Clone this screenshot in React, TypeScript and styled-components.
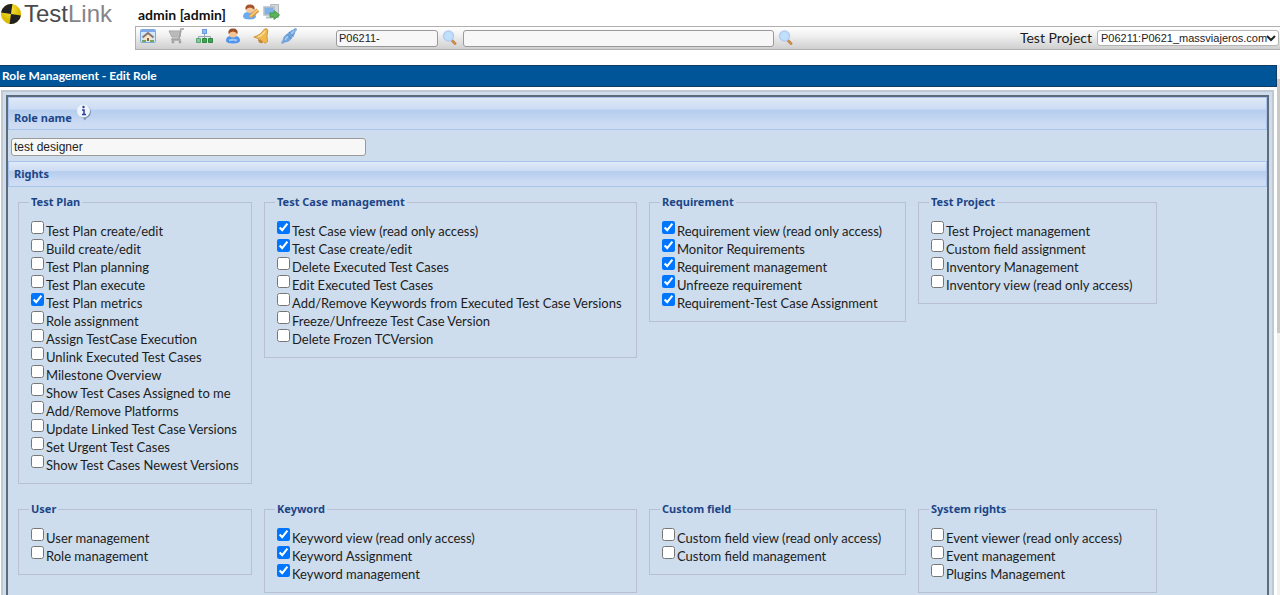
import React, { useState } from "react";
import styled, { createGlobalStyle } from "styled-components";

const humanist = `Lato, "Noto Sans", sans-serif`;
const heading = `"Noto Sans", "Open Sans", sans-serif`;
const arial = `"Liberation Sans", Arial, sans-serif`;

const GlobalStyle = createGlobalStyle`
  *, *::before, *::after { box-sizing: border-box; }
  html, body, #root { height: 100%; }
  body { margin: 0; background: #fff; color: #1c1c1c; font: 14px/18px ${humanist}; overflow: hidden; }
  button, input, select { font-family: ${arial}; }
`;

const Page = styled.div`
  display: flex;
  flex-direction: column;
  height: 100%;
`;
const Header = styled.header`
  display: flex;
  height: 50px;
  flex: none;
`;
const Logo = styled.a`
  display: flex;
  align-items: flex-start;
  gap: 3px;
  width: 135px;
  padding-left: 1px;
  flex: none;
  color: #4a4a4c;
  font: 24px/28px ${arial};
  text-decoration: none;
  svg { margin-top: 3px; }
`;
const LogoTail = styled.span`color: #858588;`;
const HeaderMain = styled.div`
  display: flex;
  flex: 1;
  flex-direction: column;
  min-width: 0;
`;
const UserLine = styled.div`
  display: flex;
  align-items: center;
  gap: 4px;
  height: 26px;
  padding: 0 0 2px 3px;
`;
const UserName = styled.span`
  margin-right: 13px;
  padding-top: 6px;
  color: #111;
  font-weight: 700;
`;
const IconButton = styled.button`
  display: flex;
  padding: 0;
  border: 0;
  background: none;
  cursor: pointer;
`;
const Toolbar = styled.nav`
  display: flex;
  align-items: center;
  height: 24px;
  padding: 0 1px 0 4px;
  border: 1px solid #b0b0b0;
  border-right: 0;
  background: linear-gradient(#fff, #f2f2f2 35%, #cfcfcf);
`;
const ToolIcons = styled.div`
  display: flex;
  gap: 12px;
  margin-right: 39px;
  padding-bottom: 4px;
`;
const Field = styled.input<{ $width: number; $small?: boolean }>`
  width: ${(p) => p.$width}px;
  height: ${(p) => (p.$small ? 17 : 18)}px;
  padding: 0 2px;
  border: 1px solid #9a9a9a;
  border-radius: 3px;
  background: #f7f7f7;
  color: #222;
  font-size: ${(p) => (p.$small ? 11 : 12)}px;
`;
const SearchForm = styled.form`
  display: flex;
  align-items: center;
  gap: 4px;
  margin-right: 5px;
`;
const ProjectPicker = styled.label`
  display: flex;
  align-items: center;
  gap: 5px;
  margin-left: auto;
`;
const ProjectSelect = styled.span`
  display: grid;
  align-items: center;
  > * { grid-area: 1 / 1; }
  svg { justify-self: end; margin-right: 3px; pointer-events: none; }
  select {
    appearance: none;
    width: 182px;
    height: 16px;
    padding: 0 10px 0 3px;
    border: 1px solid #b5b5b5;
    border-radius: 3px;
    background: #fff;
    color: #222;
    font-size: 11px;
  }
`;
const Body = styled.main`
  display: flex;
  flex: 1;
  min-height: 0;
  margin-top: 15px;
`;
const Content = styled.div`
  flex: 1;
  min-width: 0;
  overflow: hidden;
`;
const PageTitle = styled.h1`
  margin: 0;
  padding: 0 2px;
  border: 1px solid #123a5e;
  border-left: 0;
  background: #005498;
  color: #fff;
  font: 700 12px/20px ${humanist};
`;
const WorkArea = styled.div`
  margin: 3px 3px 0 1px;
  padding: 3px;
  border: 2px solid #c0c8d2;
  background: #cddded;
`;
const Frame = styled.form`
  min-height: 520px;
  border: 2px solid #5f6b78;
`;
const SectionBar = styled.div<{ $tall?: boolean }>`
  display: flex;
  align-items: ${(p) => (p.$tall ? "flex-start" : "center")};
  gap: 4px;
  height: ${(p) => (p.$tall ? 33 : 26)}px;
  padding: ${(p) => (p.$tall ? 6 : 0)}px 5px 0;
  border: 1px solid #a9c5ee;
  background: linear-gradient(#dfe9f8, #ccdcf3 36%, #b5cdee 40%, #cddcf3 85%);
  color: #1c4587;
  font: 700 11px/18px ${heading};
`;
const RoleLabel = styled.label`padding-top: 5px;`;
const NameRow = styled.div`
  display: flex;
  padding: 8px 3px 5px;
`;
const Groups = styled.div`
  display: grid;
  grid-template-columns: 234px 373px 257px 239px;
  column-gap: 12px;
  row-gap: 16px;
  align-items: start;
  padding: 6px 10px;
`;
const Group = styled.fieldset`
  min-width: 0;
  margin: 0;
  padding: 10px;
  border: 1px solid #b9bfd4;
`;
const Legend = styled.legend`
  padding: 0 2px;
  color: #1c4587;
  font: 700 11px/18px ${heading};
`;
const Right = styled.label`
  display: flex;
  gap: 2px;
  height: 18px;
  margin-left: 2px;
  white-space: nowrap;
  font-size: 13px;
  line-height: 20px;
  input { flex: none; width: 13px; height: 13px; margin: 0; accent-color: #0075ff; }
`;
const ScrollRail = styled.div`
  flex: none;
  width: 3px;
  padding-top: 14px;
  background: #f1f1f1;
`;
const ScrollThumb = styled.div`
  height: 254px;
  background: #c9c9c9;
`;

const LogoMark = () => (
  <svg width="20" height="22" viewBox="0 0 20 22">
    <defs>
      <radialGradient id="gold" cx="0.4" cy="0.3">
        <stop offset="0" stopColor="#fbe84a" /><stop offset="1" stopColor="#dcbc00" />
      </radialGradient>
    </defs>
    <g transform="rotate(8 10 11)">
      <circle cx="10" cy="11" r="10" fill="url(#gold)" />
      <path d="M10 11V1A10 10 0 0 0 0 11ZM10 11V21A10 10 0 0 0 20 11Z" fill="#222" />
    </g>
  </svg>
);
const Magnifier = () => (
  <svg width="16" height="16" viewBox="0 0 16 16">
    <path d="m10 10.500 3 3" stroke="#c98d4e" strokeWidth="3" strokeLinecap="round" />
    <circle cx="6.500" cy="6" r="5" fill="#bfe0fb" stroke="#b4cdf0" strokeWidth="1.500" />
  </svg>
);
const HomeIcon = () => (
  <svg width="16" height="16" viewBox="0 0 16 16">
    <rect x="0.500" y="1.500" width="15" height="13" rx="1" fill="#d3e7fc" stroke="#7fa8dc" />
    <path d="M1 2h14v2H1z" fill="#7faaea" />
    <path d="M4 9v4h8V9L8 5z" fill="#f3e6cc" />
    <path d="M2.500 9.500 8 5l5.500 4.500" fill="none" stroke="#8d7468" strokeWidth="2" />
    <path d="M7 10h2v3H7z" fill="#8a5f3d" />
    <path d="M2 13h4M10 13h4" stroke="#76a657" strokeWidth="2" />
  </svg>
);
const CartIcon = () => (
  <svg width="16" height="16" viewBox="0 0 16 16" fill="none" stroke="#a2a2a2">
    <path d="M1 3h12l-1 6H4z" fill="#c4c4c4" />
    <path d="M2 5h11M3 7h10M6 3v6M9 3v6" stroke="#b4b4b4" />
    <path d="M16 1h-3l-2 10H4v1h9" strokeWidth="1.500" />
    <circle cx="5" cy="14" r="1" fill="#888" /><circle cx="12" cy="14" r="1" fill="#888" />
  </svg>
);
const TreeIcon = () => (
  <svg width="17" height="16" viewBox="0 0 17 16">
    <path d="M8.500 5v6M2.500 11V8.500h12V11" fill="none" stroke="#98a5b2" />
    <rect x="6.500" y="1.500" width="4" height="4" fill="#8db9f5" stroke="#6d9de0" />
    <path d="M.5 10.500h4v4h-4z" fill="#85c79a" stroke="#5aa673" />
    <path d="M6.500 10.500h4v4h-4zM12.500 10.500h4v4h-4z" fill="#3ea750" stroke="#2f8741" />
  </svg>
);
const UserIcon = () => (
  <svg width="16" height="16" viewBox="0 0 16 16">
    <path d="M1 13q0-5 5-5h4q5 0 5 5-1 2.500-7 2.500T1 13" fill="#4f93ea" />
    <path d="M4 12.500q4-1.500 8 0" fill="none" stroke="#9cc8fa" strokeWidth="2" />
    <circle cx="8" cy="5.500" r="4" fill="#f3c394" />
    <path d="M3.500 6q-1-5.500 4.500-5.500T12.500 6q-2-2.500-4.500-2.500T3.500 6" fill="#9a4f28" />
  </svg>
);
const BellIcon = () => (
  <svg width="16" height="16" viewBox="0 0 16 16">
    <path d="M.8 9Q8 7 11 1.500L13 .7q1.500 0 1.800 2-1.500 5-.3 11l-2.500 1.500Q7 10 .8 9" fill="#f0b94c" stroke="#d2973a" />
    <path d="M5 9q5-2 7-6" fill="none" stroke="#fbe09a" strokeWidth="1.500" />
    <path d="M5 11q4 1 5 4-5 1-5-4" fill="#c48331" />
  </svg>
);
const PlugIcon = () => (
  <svg width="16" height="16" viewBox="0 0 16 16">
    <path d="M.5 15.500 4 12M12 4l3.500-3.500" stroke="#8fb0da" strokeWidth="3" />
    <path d="M1.500 14.500Q1.500 8 5.500 6.500L8 4q3-3 6-2.500Q15 6 12 8.500l-1.500 2Q8 15 1.500 14.500" fill="#72a5de" />
    <path d="m5.500 6 5 5M8 4l4.500 4.500" stroke="#5786c2" />
    <path d="m4 12 3-4M10 6l3-3" stroke="#a9cdf4" strokeWidth="1.500" />
  </svg>
);
const EditUserIcon = () => (
  <svg width="16" height="16" viewBox="0 0 16 16">
    <path d="M0 13q0-5 5-5h4q4 0 4 5-1 2.500-6.500 2.500T0 13" fill="#6aabf2" />
    <circle cx="7" cy="5" r="4" fill="#f5c79b" />
    <path d="M2.500 6Q1.500.5 7 .5T11.500 6Q9.500 3.500 7 3.500T2.500 6" fill="#a5532b" />
    <path d="m7 13 8-7" stroke="#dd9a44" strokeWidth="4" />
    <path d="m7 12.500 8-7" stroke="#f9d27a" strokeWidth="1.500" />
  </svg>
);
const LogoutIcon = () => (
  <svg width="17" height="16" viewBox="0 0 17 16">
    <path d="M7.500.5h8v13h-8z" fill="#d4d7da" stroke="#b4b8bc" />
    <rect x="1" y="3" width="10" height="8" fill="#7fb0e8" stroke="#b5bfca" strokeWidth="1.500" />
    <path d="M3 13.500h6" stroke="#b5bfca" strokeWidth="2" />
    <path d="M7 9h4V6.500l5.500 4.500-5.500 4.500V13H7z" fill="#5db45a" stroke="#459b45" />
  </svg>
);
const InfoIcon = () => (
  <svg width="16" height="17" viewBox="0 0 16 17">
    <path d="M8.500 1.500a7 6.500 0 0 1 2 12.500L9 16.500 7 14A7 6.500 0 0 1 8.500 1.500" fill="#7e93b0" />
    <ellipse cx="7.500" cy="7" rx="6.500" ry="6.500" fill="#eef4fc" />
    <path d="M6 6h2v4.500M6 10.500h4" fill="none" stroke="#2a3f9e" strokeWidth="1.500" />
    <circle cx="7.500" cy="3" r="1.200" fill="#2a3f9e" />
  </svg>
);

const tools = [
  ["Desktop", HomeIcon], ["Requirements", CartIcon], ["Test specification", TreeIcon],
  ["User management", UserIcon], ["Events", BellIcon], ["Plugins", PlugIcon],
] as const;

const groups: { title: string; rights: string[]; on: number[] }[] = [
  { title: "Test Plan", on: [4], rights: ["Test Plan create/edit", "Build create/edit", "Test Plan planning", "Test Plan execute", "Test Plan metrics", "Role assignment", "Assign TestCase Execution", "Unlink Executed Test Cases", "Milestone Overview", "Show Test Cases Assigned to me", "Add/Remove Platforms", "Update Linked Test Case Versions", "Set Urgent Test Cases", "Show Test Cases Newest Versions"] },
  { title: "Test Case management", on: [0, 1], rights: ["Test Case view (read only access)", "Test Case create/edit", "Delete Executed Test Cases", "Edit Executed Test Cases", "Add/Remove Keywords from Executed Test Case Versions", "Freeze/Unfreeze Test Case Version", "Delete Frozen TCVersion"] },
  { title: "Requirement", on: [0, 1, 2, 3, 4], rights: ["Requirement view (read only access)", "Monitor Requirements", "Requirement management", "Unfreeze requirement", "Requirement-Test Case Assignment"] },
  { title: "Test Project", on: [], rights: ["Test Project management", "Custom field assignment", "Inventory Management", "Inventory view (read only access)"] },
  { title: "User", on: [], rights: ["User management", "Role management"] },
  { title: "Keyword", on: [0, 1, 2], rights: ["Keyword view (read only access)", "Keyword Assignment", "Keyword management"] },
  { title: "Custom field", on: [], rights: ["Custom field view (read only access)", "Custom field management"] },
  { title: "System rights", on: [], rights: ["Event viewer (read only access)", "Event management", "Plugins Management"] },
];

export default function App() {
  const [role, setRole] = useState("test designer");
  return (
    <Page>
      <GlobalStyle />
      <Header>
        <Logo href="#"><LogoMark /><span>Test<LogoTail>Link</LogoTail></span></Logo>
        <HeaderMain>
          <UserLine>
            <UserName>admin [admin]</UserName>
            <IconButton aria-label="My settings"><EditUserIcon /></IconButton>
            <IconButton aria-label="Logout"><LogoutIcon /></IconButton>
          </UserLine>
          <Toolbar>
            <ToolIcons>
              {tools.map(([name, Icon]) => <IconButton key={name} aria-label={name}><Icon /></IconButton>)}
            </ToolIcons>
            <SearchForm onSubmit={(e) => e.preventDefault()}>
              <Field $small $width={102} aria-label="Test case ID" defaultValue="P06211-" />
              <IconButton aria-label="Find test case"><Magnifier /></IconButton>
            </SearchForm>
            <SearchForm onSubmit={(e) => e.preventDefault()}>
              <Field $small $width={311} aria-label="Search text" />
              <IconButton aria-label="Search"><Magnifier /></IconButton>
            </SearchForm>
            <ProjectPicker>
              Test Project
              <ProjectSelect>
                <select><option>P06211:P0621_massviajeros.com</option></select>
                <svg width="10" height="8" viewBox="0 0 10 8"><path d="m1 2 4 4 4-4" fill="none" stroke="#222" strokeWidth="2" /></svg>
              </ProjectSelect>
            </ProjectPicker>
          </Toolbar>
        </HeaderMain>
      </Header>
      <Body>
        <Content>
          <PageTitle>Role Management - Edit Role</PageTitle>
          <WorkArea>
            <Frame onSubmit={(e) => e.preventDefault()}>
              <SectionBar $tall>
                <RoleLabel htmlFor="role">Role name</RoleLabel>
                <IconButton type="button" aria-label="Help"><InfoIcon /></IconButton>
              </SectionBar>
              <NameRow>
                <Field id="role" $width={355} value={role} onChange={(e) => setRole(e.target.value)} />
              </NameRow>
              <SectionBar>Rights</SectionBar>
              <Groups>
                {groups.map((g) => (
                  <Group key={g.title}>
                    <Legend>{g.title}</Legend>
                    {g.rights.map((r, i) => (
                      <Right key={r}><input type="checkbox" defaultChecked={g.on.includes(i)} />{r}</Right>
                    ))}
                  </Group>
                ))}
              </Groups>
            </Frame>
          </WorkArea>
        </Content>
        <ScrollRail><ScrollThumb /></ScrollRail>
      </Body>
    </Page>
  );
}
